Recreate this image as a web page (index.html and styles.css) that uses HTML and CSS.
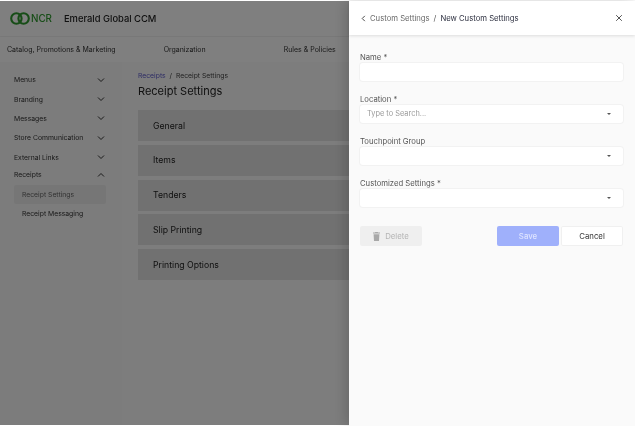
FILE: index.html
```html
<!DOCTYPE html>
<html lang="en">
<head>
    <meta charset="UTF-8">
    <meta name="viewport" content="width=device-width, initial-scale=1.0">
    <title>New Custom Settings</title>
    <link rel="stylesheet" href="styles.css">
</head>
<body>
    <div class="app">
        <header class="topbar">
            <svg class="logo-mark" width="20" height="13" viewBox="0 0 20 13" fill="none" stroke="#2e9a2e" stroke-width="2.1">
                <circle cx="6.4" cy="6.5" r="5.2"/>
                <circle cx="13.6" cy="6.5" r="5.2"/>
            </svg>
            <span class="logo-text">NCR</span>
            <span class="app-name">Emerald Global CCM</span>
        </header>
        <nav class="mainnav">
            <a class="nav-a">Catalog, Promotions &amp; Marketing</a>
            <a class="nav-b">Organization</a>
            <a class="nav-c">Rules &amp; Policies</a>
        </nav>
        <div class="main">
            <aside class="sidebar">
                <div class="side-item">Menus <svg class="chev" viewBox="0 0 8 8"><path d="M1 2.5 4 5.5 7 2.5"/></svg></div>
                <div class="side-item">Branding <svg class="chev" viewBox="0 0 8 8"><path d="M1 2.5 4 5.5 7 2.5"/></svg></div>
                <div class="side-item">Messages <svg class="chev" viewBox="0 0 8 8"><path d="M1 2.5 4 5.5 7 2.5"/></svg></div>
                <div class="side-item">Store Communication <svg class="chev" viewBox="0 0 8 8"><path d="M1 2.5 4 5.5 7 2.5"/></svg></div>
                <div class="side-item">External Links <svg class="chev" viewBox="0 0 8 8"><path d="M1 2.5 4 5.5 7 2.5"/></svg></div>
                <div class="side-item side-open">Receipts <svg class="chev" viewBox="0 0 8 8"><path d="M1 5.5 4 2.5 7 5.5"/></svg></div>
                <div class="side-sub side-active">Receipt Settings</div>
                <div class="side-sub">Receipt Messaging</div>
            </aside>
            <section class="content">
                <div class="crumbs"><span class="crumb-link">Receipts</span> <span class="crumb-sep">/</span> Receipt Settings</div>
                <h1>Receipt Settings</h1>
                <div class="card">General</div>
                <div class="card">Items</div>
                <div class="card">Tenders</div>
                <div class="card">Slip Printing</div>
                <div class="card">Printing Options</div>
            </section>
        </div>
    </div>

    <div class="overlay"></div>

    <div class="drawer">
        <div class="drawer-head">
            <svg class="back" viewBox="0 0 8 8"><path d="M5.5 1 2.5 4 5.5 7"/></svg>
            <span class="head-link">Custom Settings</span>
            <span class="head-sep">/</span>
            <span class="head-current">New Custom Settings</span>
            <svg class="close" viewBox="0 0 8 8"><path d="M1.2 1.2 6.8 6.8M6.8 1.2 1.2 6.8"/></svg>
        </div>
        <form class="drawer-body">
            <label>Name *</label>
            <div class="field"></div>
            <label>Location *</label>
            <div class="field"><span class="placeholder">Type to Search...</span><span class="caret"></span></div>
            <label>Touchpoint Group</label>
            <div class="field"><span class="caret"></span></div>
            <label>Customized Settings *</label>
            <div class="field"><span class="caret"></span></div>
            <div class="actions">
                <button type="button" class="btn btn-delete">
                    <svg width="7" height="9" viewBox="0 0 7 9" fill="#a8a8a8"><path d="M2.3 0h2.4l.4.6H7v1H0v-1h1.9zM.6 2.2h5.8L6 9H1z"/></svg>
                    Delete
                </button>
                <button type="button" class="btn btn-save">Save</button>
                <button type="button" class="btn btn-cancel">Cancel</button>
            </div>
        </form>
    </div>
</body>
</html>
```

FILE: styles.css
```css
html, body {
    height: 100%;
}
body {
    font-family: Inter, "Liberation Sans", sans-serif;
    margin: 0;
    padding: 0;
    background-color: #fff;
    color: #222;
    overflow: hidden;
}
.app {
    width: 635px;
    height: 424px;
    margin-top: 1px;
    display: flex;
    flex-direction: column;
    background: #fff;
    filter: blur(0.35px);
}
.topbar {
    height: 35px;
    display: flex;
    align-items: center;
    padding-left: 10px;
    border-bottom: 1px solid #f2f2f2;
}
.logo-text {
    font-size: 9.8px;
    font-weight: 500;
    color: #2e9a2e;
    margin-left: 1px;
}
.app-name {
    font-size: 9.4px;
    font-weight: 500;
    margin-left: 12px;
}
.mainnav {
    height: 24px;
    padding-bottom: 1px;
    display: flex;
    align-items: center;
    font-size: 7px;
    color: #333;
    box-shadow: 0 1px 2px rgba(0, 0, 0, 0.06);
}
.nav-a {
    margin-left: 7px;
}
.nav-b {
    margin-left: 48px;
}
.nav-c {
    margin-left: 78px;
}
.main {
    flex: 1;
    display: flex;
}
.sidebar {
    width: 122px;
    box-sizing: border-box;
    background: #f8f8f8;
    padding: 8px 16px 0 14px;
    font-size: 6.8px;
    color: #333;
}
.side-item {
    height: 19.4px;
    display: flex;
    align-items: center;
    justify-content: space-between;
}
.side-open {
    height: 16px;
}
.chev {
    width: 8px;
    height: 8px;
    margin-right: 1px;
    fill: none;
    stroke: #333;
    stroke-width: 1;
}
.side-sub {
    height: 19px;
    padding-left: 8px;
    display: flex;
    align-items: center;
    margin-top: 0.5px;
    border-radius: 2px;
}
.side-active {
    background: #ececec;
    color: #666;
    margin-top: 2px;
}
.content {
    flex: 1;
    padding: 9px 0 0 16px;
    background: #fbfbfb;
}
.crumbs {
    font-size: 6.8px;
    color: #444;
    height: 9px;
    line-height: 9px;
}
.crumb-link {
    color: #5a58c8;
}
.crumb-sep {
    margin: 0 2px;
}
h1 {
    font-size: 11px;
    font-weight: 400;
    margin: 4px 0 12px;
    line-height: 14px;
}
.card {
    height: 31px;
    margin-bottom: 3.8px;
    padding-left: 15px;
    display: flex;
    align-items: center;
    background: #e2e2e2;
    font-size: 8.7px;
    color: #222;
}
.overlay {
    position: fixed;
    left: 0;
    top: 1px;
    width: 635px;
    height: 424px;
    background: rgba(0, 0, 0, 0.5);
}
.drawer {
    position: fixed;
    left: 349px;
    top: 1px;
    width: 286px;
    height: 425px;
    background: #fafafa;
    border-top-right-radius: 3px;
    box-shadow: -3px 0 14px rgba(0, 0, 0, 0.18);
    filter: blur(0.3px);
}
.drawer-head {
    height: 34px;
    display: flex;
    align-items: center;
    padding: 0 12px 0 11px;
    background: #fff;
    box-shadow: 0 1px 3px rgba(0, 0, 0, 0.12);
    font-size: 7.7px;
}
.back {
    width: 7px;
    height: 7px;
    margin-right: 3px;
    fill: none;
    stroke: #444;
    stroke-width: 1.1;
}
.head-link {
    color: #6a6a6a;
}
.head-sep {
    margin: 0 4px;
    color: #555;
}
.head-current {
    color: #2d3040;
}
.close {
    width: 8px;
    height: 8px;
    margin-left: auto;
    fill: none;
    stroke: #555;
    stroke-width: 1;
}
.drawer-body {
    padding: 18px 12px 0 11px;
}
label {
    display: block;
    font-size: 7.7px;
    line-height: 9px;
    color: #555;
    margin-bottom: 0.5px;
}
.field {
    height: 18.5px;
    margin-bottom: 14px;
    padding: 0 12px 0 7px;
    display: flex;
    align-items: center;
    justify-content: space-between;
    background: #fff;
    border-radius: 3px;
    box-shadow: 0 0 0 1px #f2f2f2;
}
.placeholder {
    font-size: 7.4px;
    color: #9a9a9a;
}
.caret {
    margin-left: auto;
    width: 0;
    height: 0;
    border-left: 2.5px solid transparent;
    border-right: 2.5px solid transparent;
    border-top: 2.5px solid #555;
}
.actions {
    display: flex;
    margin-top: 19px;
    gap: 2px;
}
.btn {
    height: 20px;
    width: 62px;
    padding: 0;
    font-family: inherit;
    font-size: 7.8px;
    border: 0;
    border-radius: 2px;
}
.btn-delete {
    display: flex;
    align-items: center;
    justify-content: center;
    gap: 5px;
    background: #efefef;
    color: #b5b5b5;
    margin-right: auto;
}
.btn-save {
    background: #9fb0fb;
    color: #dfe5ff;
    font-weight: 500;
}
.btn-cancel {
    background: #fff;
    color: #333;
    box-shadow: inset 0 0 0 1px #f0f0f0;
}
```
